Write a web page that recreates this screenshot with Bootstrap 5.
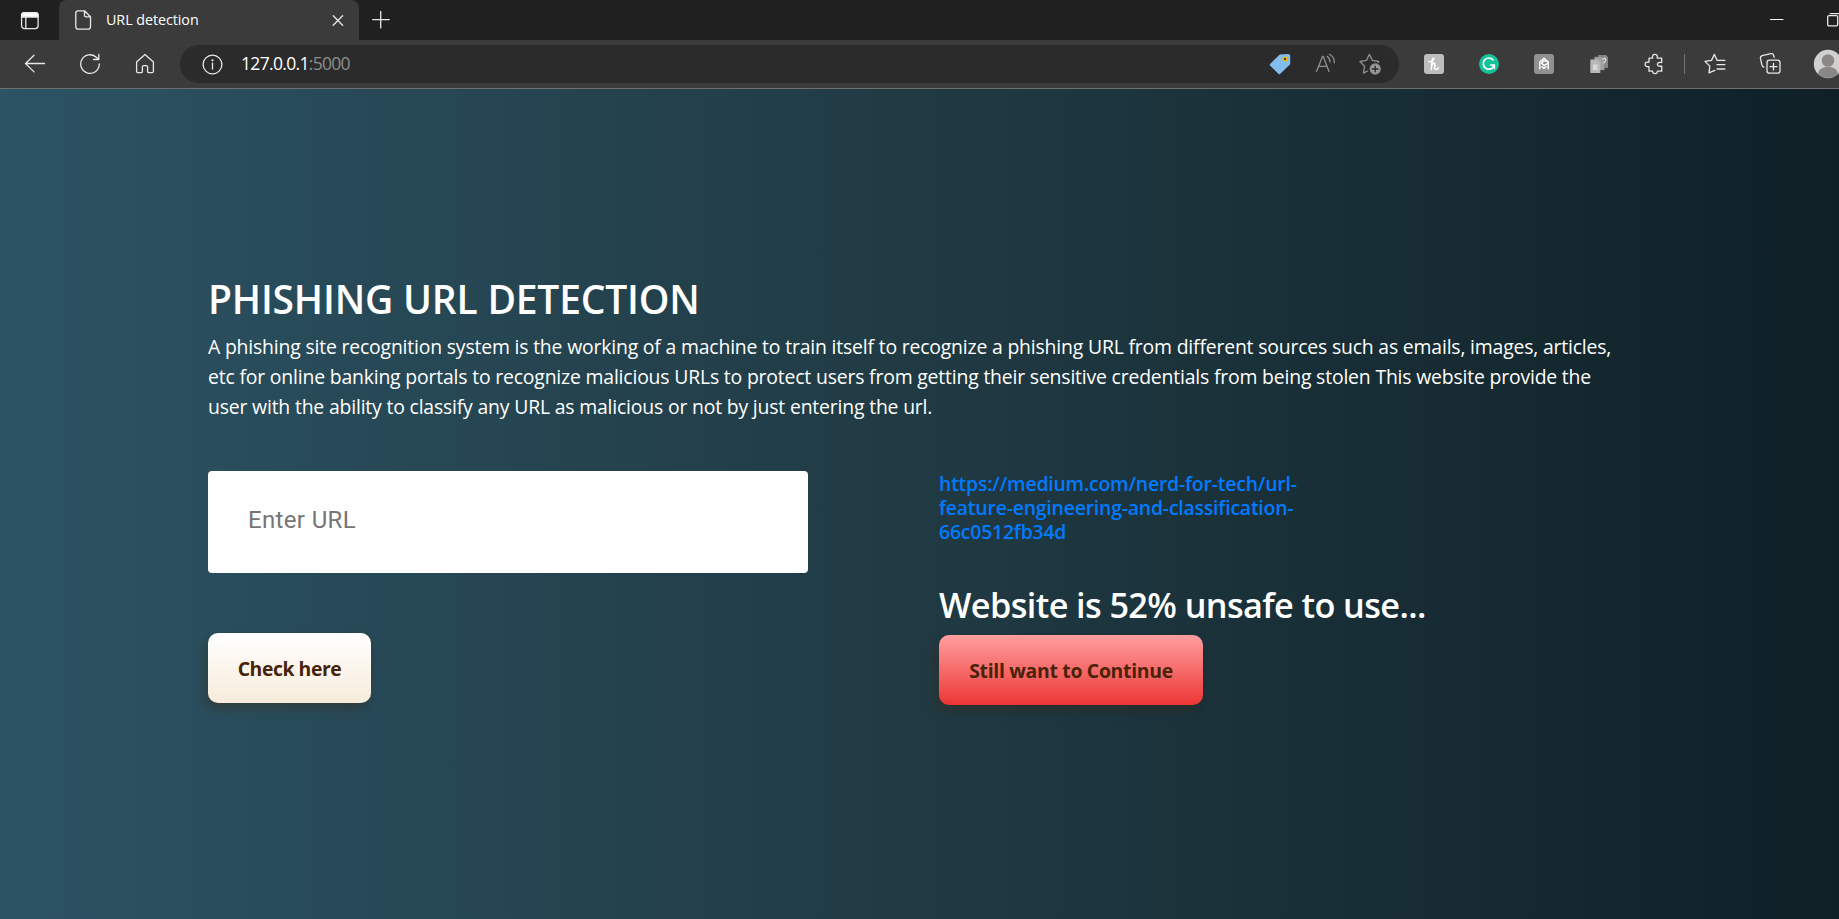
<!DOCTYPE html>
<html lang="en">
<head>
<meta charset="utf-8">
<meta name="viewport" content="width=device-width, initial-scale=1">
<title>URL detection</title>
<link href="https://cdn.jsdelivr.net/npm/bootstrap@5.3.0/dist/css/bootstrap.min.css" rel="stylesheet">
<style>
  body { font-family: "Open Sans", "Noto Sans", sans-serif; background: #203a43; height: 100vh; overflow: hidden; }
  svg { display: block; flex: none; fill: none; stroke: #e8e8e8; stroke-width: 1.3; stroke-linecap: round; stroke-linejoin: round; }
  .tabstrip { height: 40px; background: #202020; }
  .browser-tab { width: 300px; height: 40px; background: #3b3b3b; border-radius: 8px 8px 0 0; margin-left: 20px; padding: 0 15px 0 15px; color: #fff; }
  .tab-title { font-size: 14.3px; letter-spacing: -.05px; margin-left: 14px; line-height: 20px; }
  .toolbar { height: 49px; background: #3b3b3b; border-bottom: 1px solid #6f6f6f; }
  .address { width: 1219px; height: 38px; border-radius: 19px; background: #2b2b2b; margin-left: 25px; padding: 0 17px 0 22px; }
  .address-text { font-size: 17.5px; letter-spacing: -.68px; color: #fff; margin-left: 18px; line-height: 24px; padding-bottom: 2px; }
  .address-text span { color: #8d8d8d; }
  .tool-divider { width: 1px; height: 20px; background: #727272; margin-left: 18px; }
  .page { height: 830px; background: linear-gradient(to right, #2c5364, #203a43, #0f2027); padding: 186px 208px 0; color: #fff; }
  .page-title { font-size: 39px; font-weight: 600; line-height: 48px; letter-spacing: -.2px; margin: 0 0 9px; }
  .intro { font-size: 19.4px; line-height: 30px; letter-spacing: -.182px; margin: 0; white-space: nowrap; }
  .form-col { width: 731px; }
  .url-input { width: 600px; height: 102px; border: 0; border-radius: 4px; padding: 0 40px 5px; font: 24px Roboto, sans-serif; letter-spacing: .35px; }
  .url-input::placeholder { color: #757575; opacity: 1; }
  .action { height: 70px; border: 0; border-radius: 10px; color: #482307; font-size: 19.4px; font-weight: 700; padding: 2px 0 0; box-shadow: rgba(72,35,7,.16) -6px 8px 10px, rgba(72,35,7,.2) 0 3px 7px; }
  .action-check { width: 163px; margin-top: 60px; background: linear-gradient(#fff, #f7ecdb); letter-spacing: -.45px; }
  .action-go { width: 264px; background: linear-gradient(#ff9f9f, #ee3535); letter-spacing: -.3px; }
  .checked-url { width: 370px; font-size: 19.4px; font-weight: 600; line-height: 24px; letter-spacing: -.19px; color: #007bff; padding-top: 1px; }
  .verdict { font-size: 34.3px; font-weight: 600; line-height: 42px; letter-spacing: -.62px; margin: 40px 0 9px; }
</style>
</head>
<body>
<header>
  <div class="tabstrip d-flex align-items-center">
    <svg style="margin-left:20px" width="19" height="19" viewBox="0 0 19 19"><rect x="1.6" y="1.6" width="16.5" height="16" rx="2.8"/><path d="M1.6 6V4a2.6 2.6 0 0 1 2.6-2.4h11.3A2.6 2.6 0 0 1 18.1 4v2z" fill="#fff"/><path d="M5.8 6v11.4"/></svg>
    <div class="browser-tab d-flex align-items-center">
      <svg style="margin-left:1px" width="17" height="20" viewBox="0 0 17 20"><path d="M3 .8h6.5l6 6V17a2.2 2.2 0 0 1-2.2 2.2H3A2.2 2.2 0 0 1 .8 17V3A2.2 2.2 0 0 1 3 .8zM9.5 1v4.5a1.4 1.4 0 0 0 1.4 1.4h4.4"/></svg>
      <span class="tab-title">URL detection</span>
      <svg class="ms-auto" width="12" height="12" viewBox="0 0 12 12"><path d="m1.2 1.8 9.4 9.4m0-9.4-9.4 9.4"/></svg>
    </div>
    <svg style="margin-left:13px" width="18" height="18" viewBox="0 0 18 18"><path d="M.7 8.6h16.6M8.7.3v16.6"/></svg>
    <svg class="ms-auto" style="margin-right:43px" width="14" height="14" viewBox="0 0 14 14"><path d="M.5 6.5h12.5" stroke="#fff" stroke-width="1"/></svg>
    <svg width="12" height="14" viewBox="0 0 12 14"><rect x=".7" y="2.6" width="10" height="10.2" rx="1.2"/><path d="M3.2.7H12"/></svg>
  </div>
  <div class="toolbar d-flex align-items-center">
    <svg style="margin-left:24px" width="22" height="20" viewBox="0 0 22 20"><path d="M20.5 9.5H1.5M10 1.2 1.5 9.5l8.5 8.4"/></svg>
    <svg style="margin-left:33px" width="22" height="22" viewBox="0 0 22 22"><path d="M20.3 11A9.3 9.3 0 1 1 17.6 4.5L19.8 6.4M19.8 1.3v5.2h-5.3"/></svg>
    <svg style="margin-left:34px" width="20" height="22" viewBox="0 0 20 22"><path d="M1.6 9 10 1.4 18.4 9v9.2c0 .9-.6 1.5-1.5 1.5h-3c-.7 0-1.3-.6-1.3-1.3v-4.6c0-.7-.5-1.2-1.2-1.2H8.6c-.7 0-1.2.5-1.2 1.2v4.6c0 .7-.6 1.3-1.3 1.3h-3c-.9 0-1.5-.6-1.5-1.5z"/></svg>
    <div class="address d-flex align-items-center">
      <svg width="21" height="21" viewBox="0 0 21 21"><circle cx="10.5" cy="10.5" r="9.4"/><path d="M10.5 9.2v5.8"/><circle cx="10.5" cy="6.3" r=".5" fill="#eee"/></svg>
      <span class="address-text">127.0.0.1<span>:5000</span></span>
      <svg class="ms-auto" style="stroke:none" width="22" height="22" viewBox="0 0 22 22"><path d="M10.7 1.5 19 1c1.300 0 2.200.8 2.200 2v8.200L11 20.900c-.5.4-1 .4-1.400 0L1 12.400c-.5-.5-.4-1 0-1.500z" fill="#83bdee"/><rect x="13.500" y="3.700" width="5" height="4.600" rx="1.200" fill="#f2b400"/><rect x="15" y="5" width="2" height="2" fill="#444"/></svg>
      <svg style="margin-left:24px;stroke:#8f8f8f" width="22" height="22" viewBox="0 0 22 22"><path d="m1.500 18.500 6-15h.8l5.700 15M3.500 13.300h8.600M12.200 3.400c2 1.300 2.800 3.200 2.800 5.600M14.500 1.200c3.400 1.900 5 5 4.800 8.600"/></svg>
      <svg style="margin-left:21px;stroke:#8f8f8f" width="24" height="24" viewBox="0 0 24 24"><path d="M9.600 19 5.500 21.100 6.600 14.200 2 9.500 8.400 8.400 11.400 2.400 14.400 8.400 20.800 9.500l-1 1.200"/><circle cx="17.200" cy="17" r="5" fill="#9a9a9a"/><path d="M17.200 14.200v5.600m-2.800-2.800H20" stroke="#2b2b2b"/></svg>
    </div>
    <svg style="margin-left:25px" width="20" height="20" viewBox="0 0 20 20"><rect width="20" height="20" rx="3" fill="#bdbdbd" stroke="none"/><path d="M5 7.800c3-.2 5-1.800 4.700-3.300C9.100 3 7.900 6 7.400 15.500M7.500 12c1.200-3.300 3.600-3.700 3.300-1.200-.3 2.500-.5 4.700 1.200 4.700 1 0 1.800-.7 2.500-1.500" stroke="#fff" stroke-width="1.600"/></svg>
    <svg style="margin-left:35px" width="20" height="20" viewBox="0 0 20 20"><circle cx="10" cy="10" r="10" fill="#15c39a" stroke="none"/><path d="M14 5.800a5.600 5.600 0 1 0 1.300 5.200h-3.600m3.600 0v3.300" stroke="#fff" stroke-width="1.700"/></svg>
    <svg style="margin-left:35px" width="20" height="20" viewBox="0 0 20 20"><rect width="20" height="20" rx="3" fill="#919191" stroke="none"/><path d="M5.800 14.800V8L10 4.200 14.200 8v6.800M13.200 7.500 10 6.600 7.600 9 10 11.500l3-1.700M8 12.800l2 1.700 2-1.700" stroke="#fff" stroke-width="1.500"/></svg>
    <svg style="margin-left:36px;stroke:none" width="19" height="20" viewBox="0 0 19 20"><path d="M8 1h8l2 2v11H8z" fill="#858585"/><path d="M4.500 3h8l2 2v11h-10z" fill="#a2a2a2" stroke="#777" stroke-width=".5"/><path d="M.3 5.500h7l3 3V19H.3z" fill="#b8b8b8"/><path d="M3 10.500h4.500V16H3z" fill="#d9d9d9"/><path d="m13 5 2-1 1 2-2 3" stroke="#ddd"/></svg>
    <svg style="margin-left:35px" width="22" height="22" viewBox="0 0 22 22"><path d="M5 5.200h3.600c-.5-2.300.3-3.800 2.300-3.800s2.800 1.500 2.300 3.800h4.500v4.300c-2.900-.5-4.300.1-4.300 1.800s1.400 2.300 4.300 1.800v5.100h-4.300c.2 1.600-.8 2.400-2.300 2.400s-2.700-.8-2.500-2.400H5v-4.600c-2.600.3-3.900-.5-3.900-2.300S2.400 8.800 5 9.100z"/></svg>
    <div class="tool-divider"></div>
    <svg style="margin-left:18px" width="24" height="22" viewBox="0 0 24 22"><path d="M11.800 17.400 6 19.900l.8-6.800L2 8.400l6.500-1L11.400 1.400l2.700 5.800M14 7.400h7.800M14 11.700h7.800M14 16h7.800"/></svg>
    <svg style="margin-left:32px" width="24" height="24" viewBox="0 0 24 24"><rect x="8" y="8.200" width="13" height="13" rx="2.500"/><path d="M14.500 11.300v6.800m-3.400-3.400h6.800M4.800 15.200c-1.200-.4-1.800-1.500-2.100-3L1.500 6.700c-.3-1.600.4-2.600 1.800-3L11.800 1.700c1.500-.3 2.500.4 2.900 1.800l.5 1.800"/></svg>
    <svg style="margin-left:30px;stroke:none" width="26" height="30" viewBox="0 0 26 30"><circle cx="15" cy="15" r="14.200" fill="#d2d0ce"/><circle cx="15" cy="11.500" r="6.300" fill="#8a8886"/><path d="M5 25c1-5.500 5-7 10-7s9 1.500 10 7A14.200 14.200 0 0 1 5 25z" fill="#8a8886"/></svg>
  </div>
</header>

<main class="page">
  <h1 class="page-title">PHISHING URL DETECTION</h1>
  <p class="intro">A phishing site recognition system is the working of a machine to train itself to recognize a phishing URL from different sources such as emails, images, articles,<br>etc for online banking portals to recognize malicious URLs to protect users from getting their sensitive credentials from being stolen This website provide the<br>user with the ability to classify any URL as malicious or not by just entering the url.</p>
  <div class="d-flex align-items-start" style="margin-top:49px">
    <form class="form-col d-flex flex-column align-items-start">
      <input class="url-input d-block" type="text" placeholder="Enter URL" aria-label="URL">
      <button class="action action-check" type="button">Check here</button>
    </form>
    <section>
      <a class="checked-url d-block text-decoration-none" href="#">https://medium.com/nerd-for-tech/url-<br>feature-engineering-and-classification-<br>66c0512fb34d</a>
      <h2 class="verdict">Website is 52% unsafe to use...</h2>
      <button class="action action-go" type="button">Still want to Continue</button>
    </section>
  </div>
</main>
<script src="https://cdn.jsdelivr.net/npm/bootstrap@5.3.0/dist/js/bootstrap.bundle.min.js"></script>
</body>
</html>
